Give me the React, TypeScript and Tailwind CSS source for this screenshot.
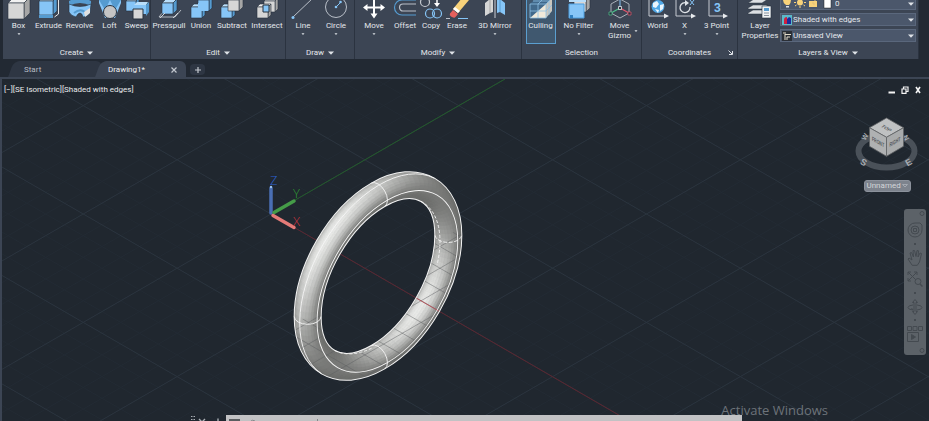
import React from "react";

type P = { children?: React.ReactNode };
const BLUE = "#86c5f7";
const LIGHT = "#b9defa";
const DEEP = "#559bd0";
const GREY = "#d6d6d6";
const EDGE = "#27303c";

function Glyph({ children }: P) {
  return (
    <svg viewBox="-15 0 30 21" className="h-[21px] w-[30px] shrink-0" fill="none" aria-hidden="true">
      {children}
    </svg>
  );
}

function Caret({ small = false }: { small?: boolean }) {
  return (
    <svg viewBox="0 0 6 4" className={small ? "h-[2px] w-[4px] shrink-0" : "h-[4px] w-[6px] shrink-0"} aria-hidden="true">
      <path d="M0 .5h6L3 3.8z" fill="#dfe3e8" />
    </svg>
  );
}

function Cube({ x, y, s, d = 4, kind = "grey" }: { x: number; y: number; s: number; d?: number; kind?: "grey" | "blue" }) {
  const c = kind === "blue" ? [BLUE, LIGHT, DEEP] : [GREY, "#f1f1f1", "#a6a6a6"];
  return (
    <g stroke={EDGE} strokeWidth=".6" strokeLinejoin="round">
      <path d={`M${x} ${y}l${d} ${-d}h${s}l${-d} ${d}z`} fill={c[1]} />
      <path d={`M${x + s} ${y}l${d} ${-d}v${s}l${-d} ${d}z`} fill={c[2]} />
      <path d={`M${x} ${y}h${s}v${s}h${-s}z`} fill={c[0]} />
    </g>
  );
}

const icons: Record<string, React.ReactNode> = {
  Box: <Cube x={-11} y={3} s={16} d={6} />,
  Extrude: (
    <>
      <Cube x={-10} y={1} s={14} d={4} kind="blue" />
      <path d="M-10 15h14v3h-14z" fill={DEEP} />
      <path d="M9.500 0v14l-4 3" stroke="#e8e8e8" />
    </>
  ),
  Revolve: (
    <>
      <path d="M-11 1Q0-5 11 1v5Q0 0-11 6z" fill={DEEP} />
      <path d="M-11 4Q0 9 11 4l-1 9q-3 4-7 4-1-4-3-4t-4 4q-5-1-7-5z" fill={BLUE} stroke={EDGE} strokeWidth=".6" />
      <path d="M-6 13Q0 8 5 12" stroke={DEEP} strokeWidth="2" />
      <path d="M4 12l6-4v5l-5 4z" fill="#e0e0e0" />
    </>
  ),
  Loft: (
    <>
      <path d="M-11 0h22v3L5 18H-5L-11 3z" fill={BLUE} />
      <path d="M-11 0l6 10L0 0zM11 0L5 10 0 0z" fill={DEEP} />
      <circle cx="0" cy="12" r="6.500" fill="#c4c4c4" stroke={EDGE} />
    </>
  ),
  Sweep: (
    <>
      <Cube x={-11} y={1} s={10} d={3} kind="blue" />
      <path d="M-3 5l3-3h11l-2 3z" fill={LIGHT} />
      <path d="M-3 5H9v9H-3z" fill={BLUE} />
      <path d="M9 5l3-3v10l-3 4z" fill={DEEP} />
      <path d="M-4 9H6v10H-4z" fill={GREY} stroke={EDGE} />
    </>
  ),
  Presspull: (
    <>
      <path d="M-10 17l4-5M-10 17H6M6 17L12 10" stroke="#cfd4da" strokeWidth=".8" />
      <Cube x={-7} y={3} s={11} d={4} kind="blue" />
      <path d="M-9 18l5-5M4 18l5-5" stroke="#cfd4da" />
    </>
  ),
  Union: (
    <>
      <Cube x={-3} y={0} s={11} d={3} kind="blue" />
      <Cube x={-10} y={7} s={11} d={3} kind="blue" />
      <path d="M-3 3h10v8H-3z" fill={BLUE} />
    </>
  ),
  Subtract: (
    <>
      <Cube x={-11} y={7} s={11} d={3} kind="blue" />
      <Cube x={-4} y={0} s={11} d={4} />
    </>
  ),
  Intersect: (
    <>
      <Cube x={-3} y={1} s={11} d={3} />
      <Cube x={-10} y={7} s={11} d={3} />
      <path d="M-4 5H2v7H-4z" fill={BLUE} stroke={EDGE} />
    </>
  ),
  Line: (
    <>
      <path d="M-10 17L10-2" stroke="#b9bfc8" />
      <circle cx="-10" cy="17.500" r="1.500" fill={BLUE} />
    </>
  ),
  Circle: (
    <>
      <circle cx="0" cy="7" r="10.500" stroke="#b9bfc8" />
      <path d="M0 7l5-5" stroke={BLUE} />
      <circle cx="0" cy="7" r="1.300" fill={BLUE} />
      <circle cx="4.500" cy="2" r="1.300" fill={BLUE} />
    </>
  ),
  Move: (
    <>
      <path d="M0-3v18M-8 7.500H8" stroke="#fff" strokeWidth="2" />
      <path d="M-3.500 13.500h7L0 18.500zM-6.500 4v7l-4.500-3.500zM6.500 4v7L11 7.500z" fill="#fff" />
    </>
  ),
  Offset: (
    <>
      <path d="M11 0H-3a7 7 0 000 15h14" stroke={DEEP} strokeWidth="1.200" />
      <path d="M11 4H-2a3.500 3.500 0 000 7h13" stroke="#b9bfc8" strokeWidth="1.200" />
    </>
  ),
  Copy: (
    <>
      <circle cx="-6" cy="2" r="4.500" stroke="#c5cad1" strokeWidth="1.200" />
      <circle cx="-1" cy="13.500" r="4.500" stroke={BLUE} strokeWidth="1.200" />
      <circle cx="6" cy="13.500" r="4.500" stroke={BLUE} strokeWidth="1.200" />
      <path d="M6-1v4" stroke="#fff" strokeWidth="1.500" />
      <path d="M3 3h6L6 7z" fill="#fff" />
    </>
  ),
  Erase: (
    <>
      <path d="M-11 18.500h4" stroke="#b9bfc8" />
      <path d="M1 18.500h10" stroke={BLUE} />
      <path d="M-4 9L5-2h7v2L1 13z" fill="#f8d27a" />
      <path d="M-4 9l2-2 5 4-2 2z" fill="#fff" />
      <path d="M-4 10l5 4-3 3.500q-2 .5-4-1t-1-3z" fill="#e5605c" />
    </>
  ),
  "3D Mirror": (
    <>
      <path d="M-10 3l5-4h3v13l-3 1-5 3z" fill={GREY} />
      <path d="M-5-1v14" stroke="#a5a5a5" />
      <path d="M2-1h3l5 4v12l-5-3-3 1z" fill={BLUE} />
      <path d="M5-1v13" stroke={DEEP} />
      <path d="M0 0v18" stroke="#c9cdd3" />
    </>
  ),
  Culling: (
    <>
      <path d="M-11 4l6-6h16v13l-6 7h-16z" fill="#41698b" />
      <path d="M-11 18L5 4v14z" fill="#f0e9da" />
      <path d="M5 18V4l6-6v13z" fill="#c9c6be" />
      <path d="M-11 4H5v14h-16zM-11 11H5M-3 4v14M5 4l6-6M5 11l6-6M8 1v14M-8 1H8M-3 4l6-6" stroke="#8dbfe3" strokeWidth=".8" />
    </>
  ),
  "No Filter": (
    <>
      <Cube x={-5} y={0} s={12} d={4} />
      <path d="M-10 4H5v14h-15z" fill={BLUE} stroke="#4c9fe0" />
      <path d="M-10 1H7" stroke={LIGHT} strokeWidth="2" />
      <path d="M-9 15h3v3h-3z" fill="#2f7fc0" />
    </>
  ),
  Gizmo: (
    <>
      <path d="M0-1l9 5v9l-9 5-9-5V4z" stroke="#aab0b9" />
      <path d="M0 8V0" stroke={BLUE} />
      <path d="M0 8l9 5" stroke="#e0556b" strokeWidth="1.200" />
      <path d="M0 8l-9 5" stroke="#4dc08b" strokeWidth="1.200" />
      <path d="M-1.500 6.500h3v3h-3z" fill={EDGE} stroke="#fff" strokeWidth=".7" />
      <path d="M8 12h3v3H8z" fill={EDGE} stroke="#e0556b" strokeWidth=".7" />
      <path d="M-11 12h3v3h-3z" fill={EDGE} stroke="#4dc08b" strokeWidth=".7" />
    </>
  ),
  World: (
    <>
      <path d="M-9 0v16H7" stroke="#c5cad1" />
      <path d="M6 13.500l5 2.500-5 2.500z" fill="#e8ebee" />
      <circle cx="0" cy="6.500" r="6.500" fill="#4fa7e6" />
      <path d="M-5 3l4-2 2 3-3 4-3-1zM2 5l4-1-1 5-3 2zM-3 9l4 1-1 3z" fill="#eaf5fd" />
    </>
  ),
  X: (
    <>
      <path d="M-9 0v16H7" stroke="#c5cad1" />
      <path d="M6 13.500l5 2.500-5 2.500z" fill="#e8ebee" />
      <path d="M2 3a5 5 0 103 4" stroke="#dfe3e8" strokeWidth="1.300" />
      <path d="M0 0l4 3-4 3z" fill="#dfe3e8" />
      <path d="M5 0l4 5M9 0L5 5" stroke={BLUE} />
    </>
  ),
  "3 Point": (
    <>
      <path d="M-8 0v16H7" stroke="#c5cad1" />
      <path d="M6 13.500l5 2.500-5 2.500z" fill="#e8ebee" />
      <text x="-3" y="12" fontSize="12" fontWeight="700" fill={BLUE}>3</text>
    </>
  ),
  Layer: (
    <>
      <path d="M-12 3l6-4H8L2 3zM-12 8l5-3H8L2 9h-14zM-12 13l5-3H6l-4 4h-14z" fill="#dcdfe3" stroke={EDGE} strokeWidth=".5" />
      <path d="M2 6h9v12H2z" fill="#f0f2f4" stroke={EDGE} strokeWidth=".6" />
      <path d="M4 8h5v3H4z" fill={DEEP} />
      <path d="M4 13h5M4 15.500h5" stroke="#8a929c" />
    </>
  ),
};

function Tool({ name, icon, width, menu, active }: { name: React.ReactNode; icon: string; width: string; menu?: "below" | "side"; active?: boolean }) {
  return (
    <button
      type="button"
      className={`relative flex h-[44px] shrink-0 flex-col items-center whitespace-nowrap leading-[10px] ${width} ${
        active ? "border border-t-0 border-[#5b9fd0] bg-[#40586f]" : ""
      }`}
    >
      <Glyph>{icons[icon]}</Glyph>
      <span>{name}</span>
      {menu === "below" && <span className="mt-0.5 flex"><Caret small /></span>}
      {menu === "side" && <span className="absolute right-0 bottom-3 flex"><Caret small /></span>}
    </button>
  );
}

function Panel({ title, width, caret = true, launcher, children }: P & { title: string; width: string; caret?: boolean; launcher?: boolean }) {
  return (
    <section aria-label={title} className={`flex shrink-0 flex-col border-r border-[#2b3340] bg-[#3c4554] ${width}`}>
      <div className="flex h-[44px] justify-center">{children}</div>
      <div className="relative flex h-[15px] items-center justify-center gap-1 pt-0.5">
        <span className="leading-[10px]">{title}</span>
        {caret && <Caret />}
        {launcher && (
          <button type="button" aria-label={`${title} settings`} className="absolute right-1 bottom-1">
            <svg viewBox="0 0 5 5" className="size-[5px]" fill="none" stroke="#dfe3e8"><path d="M.5.5l3.500 3.500M4.500 1v3.500H1" /></svg>
          </button>
        )}
      </div>
    </section>
  );
}

function Combo({ label, value, icon, pad }: { label: string; value: string; icon: React.ReactNode; pad: string }) {
  return (
    <div className="relative flex items-center">
      <select aria-label={label} className={`h-[13px] w-full appearance-none border border-[#5a677c] bg-[#4b576b] text-[#e6e9ed] ${pad}`}>
        <option>{value}</option>
      </select>
      <span className="pointer-events-none absolute left-0.5 flex">{icon}</span>
      <span className="pointer-events-none absolute right-0.5 flex"><Caret /></span>
    </div>
  );
}

function Ribbon() {
  return (
    <div className="flex h-[59px] overflow-hidden pl-[3px]">
      <Panel title="Create" width="w-[148px]">
        <Tool name="Box" icon="Box" width="w-[30px]" menu="below" />
        <Tool name="Extrude" icon="Extrude" width="w-[30px]" />
        <Tool name="Revolve" icon="Revolve" width="w-[32px]" />
        <Tool name="Loft" icon="Loft" width="w-[28px]" />
        <Tool name="Sweep" icon="Sweep" width="w-[26px]" />
      </Panel>
      <Panel title="Edit" width="w-[135px]">
        <Tool name="Presspull" icon="Presspull" width="w-[36px]" />
        <Tool name="Union" icon="Union" width="w-[28px]" />
        <Tool name="Subtract" icon="Subtract" width="w-[34px]" />
        <Tool name="Intersect" icon="Intersect" width="w-[36px]" />
      </Panel>
      <Panel title="Draw" width="w-[69px]">
        <Tool name="Line" icon="Line" width="w-[32px]" menu="below" />
        <Tool name="Circle" icon="Circle" width="w-[34px]" menu="below" />
      </Panel>
      <Panel title="Modify" width="w-[167px]">
        <Tool name="Move" icon="Move" width="w-[36px]" menu="below" />
        <Tool name="Offset" icon="Offset" width="w-[26px]" />
        <Tool name="Copy" icon="Copy" width="w-[26px]" />
        <Tool name="Erase" icon="Erase" width="w-[26px]" />
        <Tool name="3D Mirror" icon="3D Mirror" width="w-[50px]" menu="below" />
      </Panel>
      <Panel title="Selection" width="w-[120px]" caret={false}>
        <Tool name="Culling" icon="Culling" width="w-[30px]" active />
        <Tool name="No Filter" icon="No Filter" width="w-[46px]" menu="below" />
        <Tool name={<>Move<br />Gizmo</>} icon="Gizmo" width="w-[36px]" menu="side" />
      </Panel>
      <Panel title="Coordinates" width="w-[96px]" caret={false} launcher>
        <Tool name="World" icon="World" width="w-[28px]" />
        <Tool name="X" icon="X" width="w-[26px]" menu="below" />
        <Tool name="3 Point" icon="3 Point" width="w-[38px]" menu="below" />
      </Panel>
      <Panel title="Layers & View" width="w-[181px]">
        <Tool name={<>Layer<br />Properties</>} icon="Layer" width="w-[40px]" />
        <div className="-mt-[3px] flex w-[136px] flex-col gap-[3px]">
          <Combo
            label="Layer"
            value="0"
            pad="pl-[54px]"
            icon={
              <svg viewBox="0 -3 50 13" className="h-[13px] w-[50px]" fill="none">
                <path d="M1-3h8v3q0 3-2 5H4Q1 3 1 0z" fill="#f8d27a" />
                <path d="M4 6h3v1.500H4z" fill="#dfe3e8" />
                <circle cx="18" cy="2.500" r="3" fill="#f8d27a" />
                <path d="M18 6v2M13 6l1.500-1M23 6l-1.500-1M12 2.500h2M22 2.500h2" stroke="#f8d27a" />
                <path d="M27 1h8v6h-8z" fill="#f8d27a" />
                <path d="M33 1v-3h3M30 3h2v2" stroke="#e2c07a" />
                <path d="M42-3h7V8h-7z" fill="#fff" stroke="#222" strokeWidth=".5" />
              </svg>
            }
          />
          <Combo
            label="Visual style"
            value="Shaded with edges"
            pad="pl-[12px]"
            icon={
              <svg viewBox="0 0 10 10" className="size-[10px]">
                <path d="M0 0h10v10H0z" fill="#5bb9c9" />
                <path d="M2 5q0-3 3-3v7H2z" fill="#d01f3e" />
                <path d="M5 4l2-2 2 1v6H5z" fill="#1d2a9c" />
              </svg>
            }
          />
          <Combo
            label="View"
            value="Unsaved View"
            pad="pl-[12px]"
            icon={
              <svg viewBox="0 0 10 10" className="size-[10px]" fill="none">
                <path d="M0 0h10v10H0z" fill="#2b2f36" />
                <path d="M1 2h3M3 3v6M3 3.500h6M5 6h3M5 6v3" stroke="#e3dccb" />
              </svg>
            }
          />
        </div>
      </Panel>
    </div>
  );
}

function FileTabs() {
  return (
    <nav aria-label="Drawings" className="flex h-[18px] items-end pl-[15px]">
      <div className="relative flex h-[16px] w-[87px] items-center rounded-t-md bg-[#2e3643] pt-px pl-[9px] text-[#b7bcc4] before:absolute before:-left-1 before:bottom-0 before:h-full before:w-3 before:-skew-x-[20deg] before:rounded-tl-md before:bg-[#2e3643]">
        <button type="button" className="relative">Start</button>
      </div>
      <div className="relative flex h-[16px] w-[84px] items-center justify-between rounded-t-md bg-[#3c4554] pt-px pr-[9px] pl-[6px] text-[#eef0f2] before:absolute before:-left-1 before:bottom-0 before:h-full before:w-3 before:-skew-x-[20deg] before:rounded-tl-md before:bg-[#3c4554]">
        <button type="button" className="relative">Drawing1*</button>
        <button type="button" aria-label="Close drawing">
          <svg viewBox="0 0 6 6" className="size-[6px]" stroke="#c3c8cf" strokeWidth="1.200"><path d="M.5.5l5 5M5.500.5l-5 5" /></svg>
        </button>
      </div>
      <button type="button" aria-label="New drawing" className="mb-0.5 ml-1 flex h-[11px] w-[15px] items-center justify-center rounded bg-[#2e3643]">
        <svg viewBox="0 0 6 6" className="size-[6px]" stroke="#c3c8cf" strokeWidth="1.200"><path d="M0 3h6M3 0v6" /></svg>
      </button>
    </nav>
  );
}

// Model space is projected isometrically; SX and SY are the screen steps of one unit along X and Y.
const SX = 0.707;
const SY = 0.408;
const OX = 271;
const OY = 214;
const CX = 378;
const CY = 276;
const RING = 99.5;
const TUBE = 13.35;

function project(x: number, y: number, z: number) {
  return [CX + (x + y) * SX, CY + (x - y) * SY - z * 0.816];
}

function torusFacets() {
  const light = [0.2, -0.62, 0.76];
  const n = 96;
  const m = 32;
  const at = (i: number, j: number) => {
    const t = (i / n) * Math.PI * 2;
    const p = (j / m) * Math.PI * 2;
    const rho = RING + TUBE * Math.cos(p);
    return project(TUBE * Math.sin(p), rho * Math.cos(t), rho * Math.sin(t));
  };
  const list: { depth: number; d: string; fill: string }[] = [];
  for (let i = 0; i < n; i++) {
    for (let j = 0; j < m; j++) {
      const t = ((i + 0.5) / n) * Math.PI * 2;
      const p = ((j + 0.5) / m) * Math.PI * 2;
      const nx = Math.sin(p);
      const ny = Math.cos(p) * Math.cos(t);
      const nz = Math.cos(p) * Math.sin(t);
      if (nx - ny + nz < -0.15) continue;
      const lit = Math.max(0, nx * light[0] + ny * light[1] + nz * light[2]);
      const v = Math.round(108 + 124 * Math.pow(lit, 1.5));
      const rho = RING + TUBE * Math.cos(p);
      const depth = TUBE * nx - rho * Math.cos(t) + rho * Math.sin(t);
      const q = [at(i, j), at(i + 1, j), at(i + 1, j + 1), at(i, j + 1)];
      list.push({
        depth,
        d: "M" + q.map((c) => c[0].toFixed(1) + " " + c[1].toFixed(1)).join("L") + "z",
        fill: `rgb(${v},${v + 1},${v - 1})`,
      });
    }
  }
  return list.sort((a, b) => a.depth - b.depth);
}

const facets = torusFacets();

function gridPath(step: number) {
  let d = "";
  for (let k = -50; k <= 50; k++) {
    const y = OY + k * step;
    if (Math.abs(k * step) > 1000) continue;
    d += `M${OX - 300} ${y - 173.2}L${OX + 1000} ${y + 577.4}M${OX - 300} ${y + 173.2}L${OX + 1000} ${y - 577.4}`;
  }
  return d;
}

const major = gridPath(108.4);
const minor = gridPath(21.68);

function Scene() {
  const spin = `rotate(-60 ${CX} ${CY})`;
  return (
    <svg viewBox="2 79 927 342" preserveAspectRatio="xMinYMin slice" className="absolute inset-0 h-full w-full" fill="none" role="img" aria-label="Shaded torus in isometric view">
      <defs>
        <mask id="ring" maskUnits="userSpaceOnUse" x="0" y="79" width="929" height="342">
          <ellipse cx={CX} cy={CY} rx={RING} ry="57.400" transform={spin} stroke="#fff" strokeWidth="26" />
        </mask>
        <clipPath id="below"><path d="M250 350L308 316.500 448 235.500 500 205V400H250z" /></clipPath>
      </defs>
      <path d={minor} stroke="#232b34" />
      <path d={major} stroke="#2b343e" />
      <path d="M271 214L505 79" stroke="#235c2b" />
      <path d="M271 214L629 421" stroke="#5c2630" />
      <ellipse cx={CX} cy={CY} rx={RING} ry="57.400" transform={spin} stroke="#f4f4f4" strokeWidth="28" />
      <g mask="url(#ring)">
        <ellipse cx={CX} cy={CY} rx={RING} ry="57.400" transform={spin} stroke="#8b8c8b" strokeWidth="26" />
        {facets.map((f, i) => (
          <path key={i} d={f.d} fill={f.fill} stroke={f.fill} strokeWidth=".7" />
        ))}
        <g clipPath="url(#below)">
          <path d={minor} stroke="#5c5f60" strokeOpacity=".6" strokeWidth=".8" />
          <path d="M378 276L500 346.400" stroke="#b4545c" />
        </g>
      </g>
      <g stroke="#f6f6f6" strokeWidth=".9">
        <ellipse cx={CX + 9.4} cy={CY + 5.4} rx={RING} ry="57.400" transform={`rotate(-60 ${CX + 9.4} ${CY + 5.4})`} />
        <path d="M321.600 373.700A112.850 65.100 -60 0 1 434.400 178.300" />
        <path d="M421 201.400A86.150 49.700 -60 0 1 437 265" strokeDasharray="3 2" />
        <path d="M334.900 350.600A86.150 49.700 -60 0 0 372 348" strokeDasharray="3 2" />
        <path d="M371.300 183.200A13.350 7.700 60 0 1 384.700 206.400M371.300 345.600A13.350 7.700 60 0 1 384.700 368.800M294.300 316.600A13.350 7.700 0 0 0 321 316.600" />
        <path d="M435 235.400A13.350 7.700 0 0 0 461.600 235.400" strokeDasharray="4 1.500" />
      </g>
      <g strokeLinecap="round">
        <path d="M271 213V188" stroke="#4a6fb4" strokeWidth="3.500" />
        <path d="M274 212.500L294 201" stroke="#459c48" strokeWidth="3.500" />
        <path d="M273 215.500L294 227.500" stroke="#e57b78" strokeWidth="3.500" />
      </g>
      <circle cx="271" cy="187" r="1.200" fill="#9cc2ee" />
      <g fontSize="13" fontFamily="'Open Sans', sans-serif" fontWeight="300">
        <text x="270" y="185" fill="#2c62d0">Z</text>
        <text x="293" y="198" fill="#2f9c35">Y</text>
        <text x="293" y="226" fill="#cf3540">X</text>
      </g>
    </svg>
  );
}

function ViewCube() {
  return (
    <svg viewBox="855 116 66 58" className="h-[58px] w-[66px]" fill="none" role="img" aria-label="View cube">
      <ellipse cx="887.500" cy="151" rx="28" ry="16.500" stroke="#4a5159" strokeWidth="6" />
      <g fontFamily="'Liberation Sans', sans-serif" fontWeight="700" fill="#a9aeb4" textAnchor="middle">
        <text fontSize="7" transform="translate(868 138) rotate(-60)">W</text>
        <text fontSize="7" transform="translate(905 139) rotate(60)">N</text>
        <text fontSize="9" transform="translate(863 165) rotate(30)">S</text>
        <text fontSize="9" transform="translate(911 165) rotate(-30)">E</text>
      </g>
      <g stroke="#5f6264" strokeWidth=".8" strokeLinejoin="round">
        <path d="M887.500 118l17 9.700-17 9.600-17-9.600z" fill="#bfc1c2" />
        <path d="M870.500 127.700l17 9.600v19l-17-10z" fill="#afb1b2" />
        <path d="M904.500 127.700l-17 9.600v19l17-10z" fill="#a9abac" />
      </g>
      <g fontFamily="'Liberation Sans', sans-serif" fontWeight="700" fontSize="5" fill="#54585c" textAnchor="middle">
        <text transform="matrix(.866 .5 -.866 .5 886 129)">TOP</text>
        <text transform="matrix(.7 .4 0 1.200 879 144)">FRONT</text>
        <text transform="matrix(.7 -.4 0 1.200 896 144)">RIGHT</text>
      </g>
    </svg>
  );
}

function NavBar() {
  const item = "flex w-full justify-center";
  return (
    <div role="toolbar" aria-label="Navigation" className="flex h-[146px] w-[22px] flex-col items-center justify-between rounded-[3px] bg-[#5c6268] py-[2px]">
      <svg viewBox="0 0 22 6" className="h-[6px] w-[22px]" fill="none" stroke="#454b51"><circle cx="18" cy="2.500" r="2" /></svg>
      <button type="button" aria-label="Steering wheel" className={item}>
        <svg viewBox="0 0 16 16" className="size-[16px]" fill="none" stroke="#444a50"><path d="M8 1a7 7 0 107 7V3l-2-2z" /><circle cx="8" cy="8" r="4" /><path d="M6.500 6.500h3v3h-3z" /></svg>
      </button>
      <span className="size-[2px] bg-[#444a50]" />
      <button type="button" aria-label="Pan" className={item}>
        <svg viewBox="0 0 16 17" className="h-[17px] w-[16px]" fill="none" stroke="#444a50" strokeLinecap="round"><path d="M5 16L1 10l1-1 3 2L3 4l1.500-.5L6.500 8 6 1.500h1.500L9 7.500l1-6 1.500.3-.5 6.200 2-4 1.500.5-2 8.500-2 3z" /></svg>
      </button>
      <button type="button" aria-label="Zoom extents" className={item}>
        <svg viewBox="0 0 16 16" className="size-[16px]" fill="none" stroke="#444a50"><path d="M1 1l9 9M10 1L1 10M1 4V1h3M7 1h3v3M1 7v3h3" /><circle cx="11" cy="10.500" r="3" fill="#5c6268" /><path d="M13 13l2.500 2.500" strokeWidth="1.500" /></svg>
      </button>
      <span className="size-[2px] bg-[#444a50]" />
      <button type="button" aria-label="Orbit" className={item}>
        <svg viewBox="0 0 16 16" className="size-[16px]" fill="none" stroke="#444a50"><path d="M8 .5L5.500 3.500H7v9H5.500L8 15.500l2.500-3H9v-9h1.500zM6 6Q1 6.500 1 8.500t5 2.500l-1.500-2M10 6q5 .5 5 2.500T10 11" /></svg>
      </button>
      <span className="size-[2px] bg-[#444a50]" />
      <button type="button" aria-label="Show motion" className={item}>
        <svg viewBox="0 0 16 16" className="size-[16px]" fill="none" stroke="#444a50"><path d="M.5.5h4v4h-4zM6 .5h4v4H6zM11.500.5h4v4h-4zM.5 6.500h11v9H.5z" /><path d="M4.500 8.500v5l4-2.500z" fill="#444a50" /></svg>
      </button>
      <svg viewBox="0 0 22 6" className="h-[6px] w-[22px]" fill="none" stroke="#454b51"><circle cx="18" cy="3.500" r="2" /></svg>
    </div>
  );
}

function Viewport() {
  return (
    <main className="relative flex-1 overflow-hidden border-t-2 border-l-2 border-[#3c4554] bg-[#20272f]">
      <Scene />
      <div className="relative flex items-center justify-between pt-[5px] pr-[7px] pl-[2px]">
        <span className="leading-3 text-[#e8eaec]">[−][SE Isometric][Shaded with edges]</span>
        <div className="flex gap-[5px]">
          <button type="button" aria-label="Minimize"><svg viewBox="0 0 8 8" className="size-[8px]"><path d="M.5 5.500h6.500v2H.5z" fill="#f4f4f4" /></svg></button>
          <button type="button" aria-label="Restore"><svg viewBox="0 0 8 8" className="size-[8px]" fill="none" stroke="#f4f4f4" strokeWidth="1.200"><path d="M1 3h4v4.300H1zM2.500 3V1H7v4.500H5" /></svg></button>
          <button type="button" aria-label="Close"><svg viewBox="0 0 8 8" className="size-[8px]" stroke="#f4f4f4" strokeWidth="1.600"><path d="M2 1l4 6M6 1L2 7" /></svg></button>
        </div>
      </div>
      <div className="absolute top-[37px] right-[9px] flex flex-col items-center gap-1.5">
        <ViewCube />
        <button type="button" className="flex h-[12px] w-[47px] items-center justify-between rounded-[3px] border border-[#8c929c] bg-[#7d838d] px-[2px] text-[#d3d6da]">
          Unnamed
          <svg viewBox="0 0 6 4" className="h-[4px] w-[6px]" fill="none" stroke="#a3a8b0"><path d="M.5.500h5L3 3z" /></svg>
        </button>
      </div>
      <div className="absolute top-[130px] right-[3px]"><NavBar /></div>
      <p className="absolute right-[101px] bottom-px font-['Open_Sans',sans-serif] text-[13px] leading-5 text-[#6d737a]">Activate Windows</p>
      <div className="absolute right-[187px] bottom-0 left-[187px] flex h-[6px] items-start overflow-hidden">
        <svg viewBox="0 0 37 6" className="h-[6px] w-[37px] shrink-0" fill="none" stroke="#a9aeb4">
          <path d="M2 1.500h4M2 4.500h4" strokeDasharray="1.500 1" />
          <path d="M10 4l3 3M16 4l-3 3M29 3.500v3" strokeWidth="1.400" />
        </svg>
        <label className="flex h-full flex-1 overflow-hidden bg-[#c2c2c4]">
          <span className="mt-1 ml-[3px] h-1 w-[11px] bg-[#5a5d60]" />
          <svg viewBox="0 0 80 6" className="h-[6px] w-[80px] shrink-0" fill="none" stroke="#85878a"><path d="M11 6q1-1.500 4 0M77.500 4v2" /></svg>
          <input aria-label="Command" className="min-w-0 flex-1 bg-transparent outline-none" />
        </label>
      </div>
    </main>
  );
}

export default function App() {
  return (
    <div className="flex h-screen flex-col overflow-hidden bg-[#222933] font-['Roboto','Noto_Sans',sans-serif] text-[8px] text-[#e4e7eb]">
      <Ribbon />
      <FileTabs />
      <Viewport />
    </div>
  );
}
